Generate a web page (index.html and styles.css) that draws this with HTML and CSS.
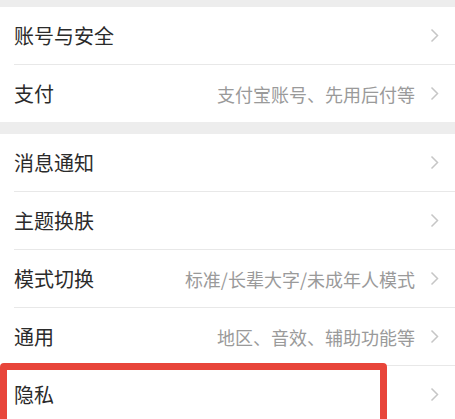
FILE: index.html
```html
<!DOCTYPE html>
<html lang="zh-CN">
<head>
  <meta charset="UTF-8">
  <title>设置</title>
  <meta name="viewport" content="width=device-width, initial-scale=1.0">
  <link rel="stylesheet" href="styles.css">
</head>
<body>

  <div class="page">
    <div class="group">
      <div class="row">
        <span class="label">账号与安全</span>
        <span class="arrow"><svg width="9" height="15" viewBox="0 0 9 15"><path d="M1.5 1.5 L7.5 7.5 L1.5 13.5" fill="none" stroke="#c6c6c6" stroke-width="1.5"/></svg></span>
      </div>
      <div class="row">
        <span class="label">支付</span>
        <span class="hint">支付宝账号、先用后付等</span>
        <span class="arrow"><svg width="9" height="15" viewBox="0 0 9 15"><path d="M1.5 1.5 L7.5 7.5 L1.5 13.5" fill="none" stroke="#c6c6c6" stroke-width="1.5"/></svg></span>
      </div>
    </div>

    <div class="group">
      <div class="row">
        <span class="label">消息通知</span>
        <span class="arrow"><svg width="9" height="15" viewBox="0 0 9 15"><path d="M1.5 1.5 L7.5 7.5 L1.5 13.5" fill="none" stroke="#c6c6c6" stroke-width="1.5"/></svg></span>
      </div>
      <div class="row">
        <span class="label">主题换肤</span>
        <span class="arrow"><svg width="9" height="15" viewBox="0 0 9 15"><path d="M1.5 1.5 L7.5 7.5 L1.5 13.5" fill="none" stroke="#c6c6c6" stroke-width="1.5"/></svg></span>
      </div>
      <div class="row">
        <span class="label">模式切换</span>
        <span class="hint">标准/长辈大字/未成年人模式</span>
        <span class="arrow"><svg width="9" height="15" viewBox="0 0 9 15"><path d="M1.5 1.5 L7.5 7.5 L1.5 13.5" fill="none" stroke="#c6c6c6" stroke-width="1.5"/></svg></span>
      </div>
      <div class="row">
        <span class="label">通用</span>
        <span class="hint">地区、音效、辅助功能等</span>
        <span class="arrow"><svg width="9" height="15" viewBox="0 0 9 15"><path d="M1.5 1.5 L7.5 7.5 L1.5 13.5" fill="none" stroke="#c6c6c6" stroke-width="1.5"/></svg></span>
      </div>
      <div class="row">
        <span class="label">隐私</span>
        <span class="arrow"><svg width="9" height="15" viewBox="0 0 9 15"><path d="M1.5 1.5 L7.5 7.5 L1.5 13.5" fill="none" stroke="#c6c6c6" stroke-width="1.5"/></svg></span>
      </div>
    </div>

    <!-- 红框标注 -->
    <div class="mark"></div>
  </div>

</body>
</html>
```

FILE: styles.css
```css
body {
  margin: 0;
  background-color: #ededed;
  font-family: "Noto Sans CJK SC", "Noto Sans", sans-serif;
  overflow: hidden;
}

.page {
  position: relative;
  padding-top: 7px;
}

.group {
  background-color: #fff;
  padding-left: 14px;
  margin-bottom: 12px;
}

.row {
  display: flex;
  align-items: center;
  height: 57px;
  padding-right: 16px;
  border-bottom: 1px solid #e8e8e8;
}

.row:last-child {
  border-bottom: none;
}

.label {
  flex: 1;
  font-size: 20px;
  color: #2b2b2b;
}

.hint {
  font-size: 18px;
  color: #9a9a9a;
  margin-right: 15px;
}

.arrow {
  display: flex;
  align-items: center;
}

.mark {
  position: absolute;
  left: 0;
  top: 363px;
  width: 387px;
  height: 120px;
  box-sizing: border-box;
  border: 7px solid #e8453a;
  border-radius: 4px;
}
```
